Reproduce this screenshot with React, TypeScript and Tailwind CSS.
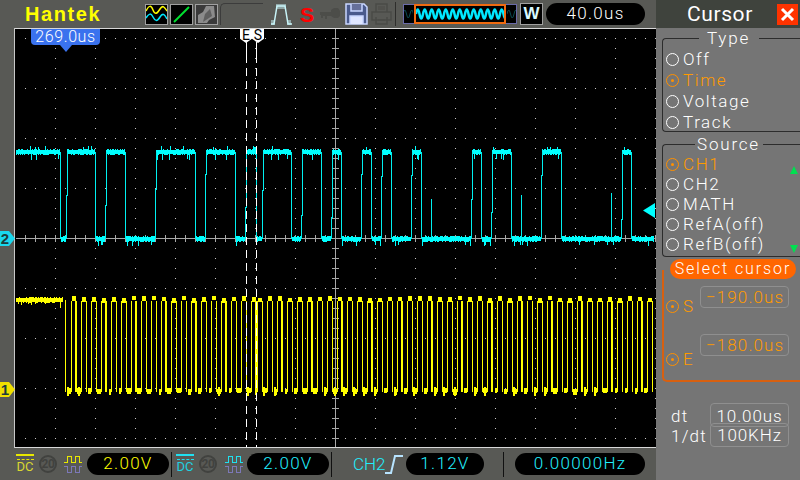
import React from 'react';

const FONT = "font-['Roboto','Liberation_Sans',Arial,sans-serif] font-light";

// small seeded noise so the traces look the same on each load
const rng = (seed: number) => {
  let s = seed;
  return () => {
    s = (s * 16807) % 2147483647;
    return (s % 1000) / 1000;
  };
};

const cyanEdges: number[] = [
  60, 66, 95, 105, 125, 155, 195, 205, 235, 245, 256, 262, 291, 301, 321, 331, 341, 361, 371, 381, 391, 411, 421,
  471, 481, 491, 511, 541, 561, 621, 631,
];
const cyanSpikes: [number, number][] = [
  [431, 199],
  [521, 195],
  [611, 193],
];

function cyanTrace() {
  const r = rng(77);
  const bars: React.ReactElement[] = [];
  const lines: string[] = [];
  let x0 = 16;
  let high = true;
  const band = (a: number, b: number, isHigh: boolean) => {
    for (let x = a; x < b; x++) {
      const c = isHigh ? 152 : 239;
      let top = c - 2 - Math.floor(r() * 2);
      let bot = c + 2 + Math.floor(r() * 2);
      const v = r();
      if (v > 0.92) top -= isHigh ? 3 : 0;
      if (v < 0.08) bot += isHigh ? 5 : 4;
      bars.push(<rect key={`c${x}`} x={x} y={top} width={1} height={bot - top} />);
    }
  };
  for (const e of [...cyanEdges, 654]) {
    band(x0, e, high);
    if (e === 654) break;
    if (high) {
      lines.push(`M${e}.5 152V239`);
    } else {
      const mid = 172 + Math.floor(r() * 50);
      lines.push(`M${e}.5 239V${mid}H${e + 1}.5V152`);
    }
    x0 = e + 1;
    high = !high;
  }
  for (const [x, y] of cyanSpikes) lines.push(`M${x}.5 239V${y}`);
  return (
    <g fill="#00ffff">
      {bars}
      <path d={lines.join('')} fill="none" stroke="#00f0f0" strokeWidth={1} />
    </g>
  );
}

function yellowTrace() {
  const r = rng(431);
  const bars: React.ReactElement[] = [];
  const thin: string[] = ['M60.5 301V308M65.5 300V392'];
  const thick: string[] = [];
  for (let x = 16; x < 63; x++) {
    const top = 297 + Math.floor(r() * 2);
    const bot = 302 + Math.floor(r() * 2) + (r() > 0.88 ? 2 : 0);
    bars.push(<rect key={`e${x}`} x={x} y={top - (r() > 0.92 ? 2 : 0)} width={1} height={bot - top} />);
  }
  const rises: number[] = [];
  for (let x = 71; x <= 251; x += 10) rises.push(x);
  for (let x = 257; x < 652; x += 10) rises.push(x);
  rises.forEach((rise, k) => {
    const fall = rise + 5;
    thin.push(`M${rise}.5 392V301`);
    if (k % 3 === 0) thick.push(`M${fall} 301V392`);
    else thin.push(`M${fall}.5 301V392`);
    const t = 296 + Math.floor(r() * 3);
    bars.push(<rect key={`t${k}`} x={rise + 1} y={t} width={fall - rise - 1} height={4 + Math.floor(r() * 2)} />);
    const w = 2 + Math.floor(r() * 3);
    bars.push(<rect key={`l${k}`} x={rise - w} y={388 + Math.floor(r() * 2)} width={w} height={5 + Math.floor(r() * 2)} />);
    if (r() > 0.6) bars.push(<rect key={`m${k}`} x={rise - 4 + Math.floor(r() * 2)} y={387} width={2} height={9} />);
  });
  return (
    <g fill="#ffff00">
      {bars}
      <path d={thin.join('')} fill="none" stroke="#ffff00" strokeWidth={1} />
      <path d={thick.join('')} fill="none" stroke="#ffff00" strokeWidth={2} />
    </g>
  );
}

function Grid() {
  const dots: React.ReactElement[] = [];
  const rows = [38, 88, 138, 188, 288, 338, 388, 438];
  for (const y of rows) {
    for (let x = 25; x < 656; x += 10) {
      if (x !== 335) dots.push(<rect key={`h${y}-${x}`} x={x} y={y} width={1} height={1} />);
    }
  }
  for (let x = 55; x < 656; x += 40) {
    if (x === 335) continue;
    for (let y = 38; y < 448; y += 10) {
      if ((y - 38) % 50 !== 0) dots.push(<rect key={`v${x}-${y}`} x={x} y={y} width={1} height={1} />);
    }
  }
  const ticks: React.ReactElement[] = [];
  for (let x = 25; x < 656; x += 10) ticks.push(<rect key={`tx${x}`} x={x} y={235} width={1} height={7} />);
  for (let y = 38; y < 448; y += 10) ticks.push(<rect key={`ty${y}`} x={332} y={y} width={7} height={1} />);
  return (
    <>
      <g fill="#c8c8c8">{dots}</g>
      <g fill="#a8a8a8">
        {ticks}
        <rect x={16} y={238} width={640} height={1} />
        <rect x={335} y={29} width={1} height={419} />
      </g>
    </>
  );
}

function Plot() {
  return (
    <svg width={641} height={420} viewBox="15 28 641 420" className="block" shapeRendering="crispEdges">
      <rect x={15} y={28} width={641} height={420} fill="#000" />
      <Grid />
      <g>{cyanTrace()}</g>
      <g>{yellowTrace()}</g>
      <path d="M246.5 42V448M256.5 42V448" stroke="#fff" strokeWidth={1} strokeDasharray="8 5" fill="none" />
      <path d="M246.5 42V56M256.5 42V56" stroke="#fff" strokeWidth={1} fill="none" />
      <path d="M655 203V218L643 210.5Z" fill="#00ffff" shapeRendering="auto" />
    </svg>
  );
}

function Radio({ on, color = 'border-white' }: { on?: boolean; color?: string }) {
  return (
    <span className={`w-[13px] h-[13px] rounded-full border ${color} flex items-center justify-center shrink-0`}>
      {on && <span className="w-[3px] h-[3px] rounded-full bg-[#ff9000]" />}
    </span>
  );
}

function OptionRow({ label, on, h }: { label: string; on?: boolean; h: string }) {
  return (
    <div className={`flex items-center gap-[4px] ${h} ${on ? 'text-[#ff9a00]' : 'text-white'}`}>
      <Radio on={on} color={on ? 'border-[#ff9000]' : 'border-white'} />
      <span className="text-[17px] tracking-[1.6px] leading-none whitespace-nowrap">{label}</span>
    </div>
  );
}

function Group({ title, titleW, className, children }: { title: string; titleW: string; className: string; children: React.ReactNode }) {
  return (
    <div className={`relative ml-[6px] border-t border-l border-b border-[#2c2c2c] rounded-l-[4px] ${className}`}>
      <div className="absolute -top-[10px] left-0 right-0 flex justify-center pr-[6px]">
        <span className={`bg-[#757575] text-white text-[17px] tracking-[1.8px] leading-[18px] text-center ${titleW}`}>{title}</span>
      </div>
      {children}
    </div>
  );
}

function ValueBox({ value }: { value: string }) {
  return (
    <div className="w-[89px] h-[22px] border border-[#8f8f8f] rounded-[4px] text-[#ff9a00] text-[17px] tracking-[1.1px] leading-[20px] pl-[5px] whitespace-nowrap">
      {value}
    </div>
  );
}

function Wave({ color, low }: { color: string; low: string }) {
  return (
    <svg width={18} height={22} viewBox="0 0 18 22" shapeRendering="crispEdges" fill="none">
      <path d="M0 9.5H3.5V3.5H7.5V9.5H11.5V3.5H15.5V9.5H18" stroke={color} strokeWidth={1.5} />
      <path d="M0 13.5H3.5V19.5H7.5V13.5H11.5V19.5H15.5V13.5H18" stroke={low} strokeWidth={1.5} />
    </svg>
  );
}

function Coupling({ bar, dash, text }: { bar: string; dash: string; text: string }) {
  return (
    <div className="w-[18px] shrink-0 flex flex-col items-center -mt-[1px]">
      <div className={`w-[18px] h-[2px] mb-[3px] ${bar}`} />
      <div className={`w-[17px] border-t border-dashed ${dash}`} />
      <span className={`text-[13px] font-normal leading-[12px] mt-[1px] ${text}`}>DC</span>
    </div>
  );
}

function Limit() {
  return (
    <div className="w-[18px] h-[18px] rounded-full border-2 border-[#41423f] text-[#41423f] text-[12px] font-bold leading-[14px] tracking-[-0.5px] text-center shrink-0">20</div>
  );
}

function Pill({ text, className, color }: { text: string; className: string; color: string }) {
  return (
    <div className={`h-[22px] rounded-full bg-black flex items-center justify-center text-[17px] tracking-[1.3px] shrink-0 ${color} ${className}`}>{text}</div>
  );
}

// overview sine, 7px period like the memory bar on the scope
function overviewWave(width: number, top: number, bottom: number) {
  let d = `M0 ${(top + bottom) / 2}`;
  for (let x = 0; x < width; x += 7) {
    d += `Q${x + 1.75} ${top - 3} ${x + 3.5} ${(top + bottom) / 2}T${x + 7} ${(top + bottom) / 2}`;
  }
  return d;
}

function TopBar() {
  return (
    <div className="h-[28px] flex items-center bg-[#585955] relative">
      <span className="ml-[25px] w-[120px] text-[#ffff00] text-[20px] font-bold tracking-[1.6px] leading-none font-['Liberation_Sans']">Hantek</span>
      <div className="flex gap-[2px]">
        <div className="w-[23px] h-[21px] bg-black border border-[#a0a0a0]">
          <svg width={21} height={19} viewBox="0 0 21 19" fill="none" strokeWidth={1.5}>
            <path d="M0 6C3 0 5 0 7 5S11 9 14 4 19 3 21 6" stroke="#ffff00" />
            <path d="M0 13C3 8 5 8 7 12S11 17 14 12 19 10 21 14" stroke="#00e8ff" />
          </svg>
        </div>
        <div className="w-[23px] h-[21px] bg-black border border-[#a0a0a0]">
          <svg width={21} height={19} viewBox="0 0 21 19" fill="none">
            <path d="M3 17L18 2" stroke="#00e030" strokeWidth={2} />
          </svg>
        </div>
        <div className="w-[23px] h-[21px] bg-[#3a3a3a] border border-[#a0a0a0]">
          <svg width={21} height={19} viewBox="0 0 21 19">
            <path d="M2 18V10L7 7L10 1H18L19 12L13 15L11 18Z" fill="#8b8b8b" />
            <path d="M7 17L9 9L14 4L16 11Z" fill="#5f5f5f" />
          </svg>
        </div>
      </div>
      <div className="ml-[2px] w-[43px] h-[22px] border-l border-t border-[#3c3c3c] rounded-tl-[5px]" />
      <svg className="ml-[8px]" width={21} height={23} viewBox="0 0 21 23" fill="none" stroke="#c8f4f8" strokeWidth={1.5}>
        <path d="M0 21H3L6 3H14L17 21H21" />
        <path d="M6 1V6M8 1V6M10 1V6M12 1V6M14 1V6M1 17V22M3 17V22M17 17V22M19 17V22" strokeWidth={1} />
      </svg>
      <span className="ml-[8px] w-[14px] text-[#ff0000] text-[21px] font-bold leading-none font-['Liberation_Sans']">S</span>
      <svg className="ml-[6px]" width={20} height={12} viewBox="0 0 20 12" fill="#4c4d49">
        <path d="M0 4H11V2L14 0H18L20 3V8L18 10H14L11 8H7V11H5V8H3V10H1V7H0Z" />
      </svg>
      <svg className="ml-[5px]" width={23} height={22} viewBox="0 0 23 22" fill="none" stroke="#c9d6ff" strokeWidth={1.5}>
        <path d="M1 1H19L22 4V21H1Z" fill="#4a5a8c" />
        <path d="M6 1V8H17V1" fill="#66709a" />
        <path d="M5 21V13H18V21" fill="#dfe6ff" />
      </svg>
      <svg className="ml-[3px]" width={21} height={22} viewBox="0 0 21 22" fill="none" stroke="#4a4b47" strokeWidth={1.5}>
        <path d="M5 9V1H16V9M1 9H20V17H1ZM5 14V21H16V14" />
        <path d="M7 4H14M7 6H14M7 17H14" strokeWidth={1} />
      </svg>
      <div className="ml-[3px] w-px h-[24px] bg-[#2e2e2c]" />
      <div className="ml-[7px] w-[114px] h-[20px] border-y border-[#6a6aa8] bg-black flex items-center justify-between relative">
        <div className="absolute inset-y-0 left-0 right-0 border-x border-[#6a6aa8]" />
        <svg width={10} height={18} viewBox="0 0 10 18" fill="none">
          <path d={overviewWave(10, 4, 14)} stroke="#0a4a50" strokeWidth={1} />
        </svg>
        <div className="w-[92px] h-[20px] border-2 border-[#f06a10] bg-black shrink-0 relative">
          <svg width={88} height={16} viewBox="0 0 88 16" fill="none">
            <path d={overviewWave(88, 2, 14)} stroke="#00e8ff" strokeWidth={2.5} />
          </svg>
        </div>
        <svg width={10} height={18} viewBox="0 0 10 18" fill="none">
          <path d={overviewWave(10, 4, 14)} stroke="#0a4a50" strokeWidth={1} />
        </svg>
      </div>
      <div className="ml-[3px] w-[23px] h-[22px] bg-black border border-[#a0a0a0] text-[#d8f8ff] text-[17px] font-bold leading-[20px] text-center font-['Liberation_Sans']">W</div>
      <Pill text="40.0us" className="ml-[3px] w-[99px]" color="text-white" />
    </div>
  );
}

function BottomBar() {
  return (
    <div className="h-[32px] bg-[#585955] flex items-center pl-[16px]">
      <Coupling bar="bg-[#e8e800]" dash="border-[#e8e800]" text="text-[#d8d830]" />
      <div className="ml-[5px]"><Limit /></div>
      <div className="ml-[7px]"><Wave color="#e8e800" low="#7c78b8" /></div>
      <Pill text="2.00V" className="ml-[5px] w-[82px]" color="text-[#ffff00]" />
      <div className="ml-[2px] w-px h-[25px] bg-[#111]" />
      <div className="ml-[4px]"><Coupling bar="bg-[#20e0f0]" dash="border-[#20e0f0]" text="text-[#20d0e0]" /></div>
      <div className="ml-[5px]"><Limit /></div>
      <div className="ml-[8px]"><Wave color="#20e0f0" low="#7c78b8" /></div>
      <Pill text="2.00V" className="ml-[4px] w-[82px]" color="text-[#20f0ff]" />
      <div className="ml-[2px] w-px h-[25px] bg-[#111]" />
      <span className="ml-[21px] w-[32px] text-[#20f0ff] text-[17px] leading-none whitespace-nowrap">CH2</span>
      <svg width={18} height={22} viewBox="0 0 18 22" fill="none" stroke="#b8e4ff" strokeWidth={2}>
        <path d="M0 20H6L10 3H18" />
      </svg>
      <Pill text="1.12V" className="ml-[3px] w-[78px]" color="text-[#20f0ff]" />
      <div className="ml-[19px] w-px h-[25px] bg-[#111]" />
      <Pill text="0.00000Hz" className="ml-[11px] w-[130px]" color="text-[#20f0ff]" />
    </div>
  );
}

function Tag({ label, bg }: { label: string; bg: string }) {
  return (
    <svg width={15} height={15} viewBox="0 0 15 15" className="block">
      <path d="M0 0H9L15 7.5L9 15H0Z" fill={bg} />
      <text x={5} y={13} textAnchor="middle" fontSize={15} fontWeight={700} fill="#1c3c3c" fontFamily="Liberation Sans">{label}</text>
    </svg>
  );
}

function Flag({ label }: { label: string }) {
  return (
    <div className="w-[12px] h-[14px] bg-white text-black text-[14px] font-normal leading-[13px] text-center [clip-path:polygon(0_0,100%_0,100%_70%,50%_100%,0_70%)]">{label}</div>
  );
}

export default function App() {
  return (
    <div className={`w-[800px] h-[480px] flex overflow-hidden bg-[#585955] ${FONT}`}>
      <div className="w-[656px] flex flex-col shrink-0">
        <TopBar />
        <div className="relative flex h-[420px]">
          <div className="w-[15px] border-r border-[#c8c8c8]" />
          <div className="border-t border-b border-[#d8d8d8] overflow-hidden">
            <div className="-mt-px -mb-px"><Plot /></div>
          </div>
          <div className="absolute left-0 top-[203px]"><Tag label="2" bg="#19d8ee" /></div>
          <div className="absolute left-0 top-[354px]"><Tag label="1" bg="#f0e000" /></div>
          <div className="absolute left-[31px] top-px w-[69px] h-[16px] bg-[#3a72ee] rounded-b-[4px] text-white text-[16px] tracking-[0.6px] leading-[16px] text-center">269.0us</div>
          <div className="absolute left-[60px] top-[17px] w-0 h-0 border-l-[6px] border-r-[6px] border-t-[7px] border-l-transparent border-r-transparent border-t-[#3a72ee]" />
          <div className="absolute left-[240px] top-px flex">
            <Flag label="E" />
            <Flag label="S" />
          </div>
        </div>
        <BottomBar />
      </div>
      <div className="flex-1 bg-[#757575] flex flex-col">
        <div className="h-[28px] bg-[#3f433d] flex items-center">
          <span className="ml-[31px] w-[90px] text-white text-[21px] font-normal tracking-[0.6px] leading-none">Cursor</span>
          <div className="w-[21px] h-[21px] bg-[#ff3300] flex items-center justify-center">
            <svg width={15} height={15} viewBox="0 0 15 15"><path d="M2 2L13 13M13 2L2 13" stroke="#fff" strokeWidth={3} /></svg>
          </div>
        </div>
        <Group title="Type" titleW="w-[60px]" className="mt-[10px] h-[94px] pt-[10px]">
          <div className="pl-[3px]">
            <OptionRow label="Off" h="h-[21px]" />
            <OptionRow label="Time" on h="h-[21px]" />
            <OptionRow label="Voltage" h="h-[21px]" />
            <OptionRow label="Track" h="h-[21px]" />
          </div>
        </Group>
        <Group title="Source" titleW="w-[68px]" className="mt-[12px] h-[113px] pt-[10px]">
          <div className="pl-[3px] -mt-px">
            <OptionRow label="CH1" on h="h-[20px]" />
            <OptionRow label="CH2" h="h-[20px]" />
            <OptionRow label="MATH" h="h-[20px]" />
            <OptionRow label="RefA(off)" h="h-[20px]" />
            <OptionRow label="RefB(off)" h="h-[20px]" />
          </div>
          <div className="absolute right-[2px] top-[21px] w-0 h-0 border-l-[4px] border-r-[4px] border-b-[8px] border-l-transparent border-r-transparent border-b-[#00e050]" />
          <div className="absolute right-[2px] top-[100px] w-0 h-0 border-l-[4px] border-r-[4px] border-t-[8px] border-l-transparent border-r-transparent border-t-[#00e050]" />
        </Group>
        <div className="relative ml-[6px] mt-[13px] h-[112px] border-l-2 border-b-2 border-[#d86010] rounded-bl-[5px]">
          <div className="absolute -top-[11px] left-[6px] w-[126px] h-[20px] rounded-full bg-[#ff6600] text-white text-[16px] tracking-[1.9px] leading-[20px] text-center whitespace-nowrap">Select cursor</div>
          <div className="pl-[2px] pt-[16px]">
            <div className="h-[48px] flex items-start">
              <div className="flex items-center gap-[4px] w-[34px] shrink-0 mt-[12px] text-[#ff9a00]">
                <Radio on color="border-[#ff9000]" />
                <span className="text-[17px] leading-none">S</span>
              </div>
              <ValueBox value="−190.0us" />
            </div>
            <div className="h-[48px] flex items-start">
              <div className="flex items-center gap-[4px] w-[34px] shrink-0 mt-[17px] text-[#ff9a00]">
                <Radio on color="border-[#ff9000]" />
                <span className="text-[17px] leading-none">E</span>
              </div>
              <ValueBox value="−180.0us" />
            </div>
          </div>
        </div>
        <div className="ml-[15px] mt-[21px] flex">
          <div className="w-[39px] text-white text-[17px] tracking-[1.2px] leading-[20px] pt-[3px] whitespace-nowrap">
            <div>dt</div>
            <div>1/dt</div>
          </div>
          <div className="flex flex-col">
            <div className="w-[79px] h-[24px] border border-[#8f8f8f] rounded-[4px] text-white text-[17px] tracking-[0.9px] leading-[24px] text-center">10.00us</div>
            <div className="-mt-[4px] w-[79px] h-[24px] border border-[#8f8f8f] rounded-[4px] text-white text-[17px] tracking-[0.9px] leading-[22px] text-center">100KHz</div>
          </div>
        </div>
      </div>
    </div>
  );
}
